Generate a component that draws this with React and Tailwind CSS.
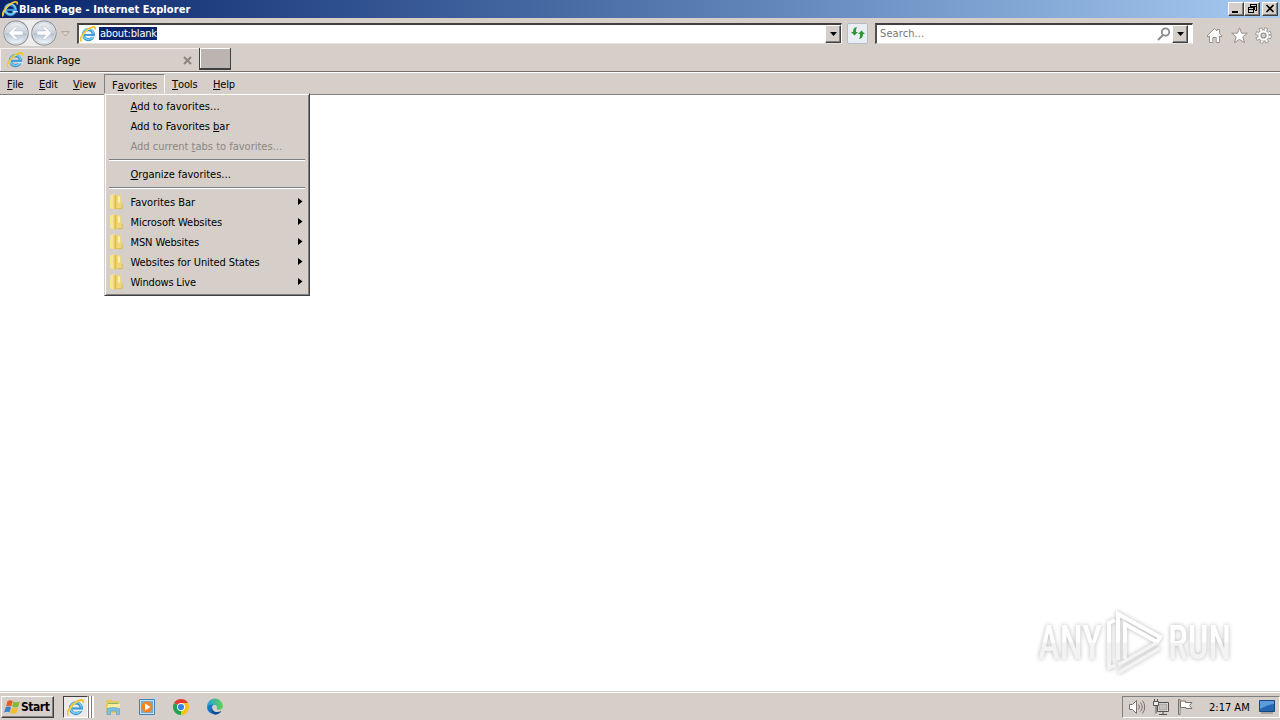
import React from "react";

const raised =
  "border border-t-white border-l-white border-r-[#404040] border-b-[#404040] shadow-[inset_-1px_-1px_0_#808080]";

function IELogo({ className }) {
  return (
    <svg viewBox="0 0 16 16" className={className}>
      <circle cx="8.400" cy="8.600" r="5" fill="none" stroke="#2e8fd0" strokeWidth="3.200" />
      <circle cx="8.400" cy="8.200" r="5.200" fill="none" stroke="#7acbf2" strokeWidth="1.500" />
      <path d="M5 8.900h9.500" stroke="#3a9bd8" strokeWidth="2" />
      <path d="M10.500 10.100h5.500v1.200h-5.500z" fill="#e3eef2" />
      <path d="M1.200 15.300C-.8 13 3 6.500 8 3.200S16 .2 15.100 3.600" fill="none" stroke="#eec32c" strokeWidth="1.800" />
      <path d="M1.500 14.200C1.500 11 5 5.700 9.500 3" fill="none" stroke="#ffe88a" strokeWidth=".7" />
    </svg>
  );
}

function NavButton({ flip }) {
  return (
    <svg viewBox="0 0 26 26" className="size-[26px] shrink-0">
      <defs>
        <linearGradient id={flip ? "nf" : "nb"} x2="0" y2="1">
          <stop offset="0" stopColor="#eef0f3" />
          <stop offset=".48" stopColor="#cbd3dc" />
          <stop offset=".52" stopColor="#b3c0ce" />
          <stop offset="1" stopColor="#f4fafd" />
        </linearGradient>
      </defs>
      <circle cx="13" cy="13" r="12.200" fill="#f3f5f6" stroke="#8f949b" strokeWidth="1.200" />
      <circle cx="13" cy="13" r="10.700" fill={`url(#${flip ? "nf" : "nb"})`} stroke="#bcc5ce" strokeWidth=".7" />
      <path
        transform={flip ? "translate(26 0) scale(-1 1)" : undefined}
        d="M5.500 13l6.300-6.200h3.400L11.200 11h8.800v4h-8.800l4 4.200h-3.400z"
        fill="#fff"
        stroke="#a9b6c4"
        strokeWidth=".5"
      />
    </svg>
  );
}

function Drop() {
  return (
    <div className={`flex h-[18px] w-4 shrink-0 items-center justify-center bg-[#d6cfc9] ${raised}`}>
      <svg viewBox="0 0 7 4" className="h-1 w-[7px]"><path d="M0 0h7L3.500 4z" fill="#000" /></svg>
    </div>
  );
}

function WinButton({ children }) {
  return (
    <div className={`h-[14px] w-4 bg-[#d6cfc9] ${raised}`}>
      <svg viewBox="0 0 14 12" className="h-3 w-[14px]" fill="none" stroke="#000" shapeRendering="crispEdges">{children}</svg>
    </div>
  );
}

function Folder() {
  return (
    <svg viewBox="0 0 16 16" className="mr-[6px] size-4 shrink-0">
      <path d="M1 1.300L6 .3V15.200l-5-1z" fill="#f6e596" />
      <path d="M4 1h6v13.800H4z" fill="#f3d978" />
      <path d="M5.500 1.500l2-.8v14.500l-2 .3z" fill="#e0bb47" />
      <path d="M7.500 1.500H12v6.700l1.500 1V14.500h-6z" fill="#f0d67c" />
      <path d="M9 2.500h2v6H9z" fill="#fdf1b8" />
      <path d="M8 14.600h5.500M13.200 9.500v5" stroke="#d8b84f" strokeWidth=".8" />
    </svg>
  );
}

function Hot({ text, k }) {
  const i = text.indexOf(k);
  return (
    <>
      {text.slice(0, i)}
      <span className="underline decoration-1 underline-offset-[1px]">{k[0]}</span>
      {text.slice(i + 1)}
    </>
  );
}

function Action({ text, k, cls }) {
  return (
    <div className={`flex h-5 items-center pl-[25.500px] ${cls}`}>
      <span><Hot text={text} k={k} /></span>
    </div>
  );
}

function Sep() {
  return (
    <div className="flex h-2 items-center px-1">
      <div className="h-[2px] w-full border-t border-b border-t-[#808080] border-b-white" />
    </div>
  );
}

function Sub({ text, cls }) {
  return (
    <div className="flex h-5 items-center pr-[6px] pl-1">
      <Folder />
      <span className={`-ml-[0.500px] grow ${cls}`}>{text}</span>
      <svg viewBox="0 0 5 7" className="mb-px h-[7px] w-[5px]"><path d="M0 0v7l4.500-3.500z" /></svg>
    </div>
  );
}

function FavoritesMenu() {
  return (
    <div className="absolute top-[93px] left-[104px] z-10 h-[203px] w-[206px] border border-t-[#d6cfc9] border-r-[#404040] border-b-[#404040] border-l-[#d6cfc9] bg-[#d6cfc9] pt-[2px] shadow-[inset_1px_1px_0_#fff,inset_-1px_-1px_0_#808080]">
      <Action text="Add to favorites..." k="Add" cls="tracking-[0.05px]" />
      <Action text="Add to Favorites bar" k="bar" cls="tracking-[-0.03px]" />
      <Action text="Add current tabs to favorites..." k="tabs" cls="text-[#8b8783]" />
      <Sep />
      <Action text="Organize favorites..." k="Organize" cls="" />
      <Sep />
      <Sub text="Favorites Bar" cls="" />
      <Sub text="Microsoft Websites" cls="tracking-[-0.06px]" />
      <Sub text="MSN Websites" cls="tracking-[-0.12px]" />
      <Sub text="Websites for United States" cls="tracking-[-0.09px]" />
      <Sub text="Windows Live" cls="tracking-[-0.18px]" />
    </div>
  );
}

function TitleBar() {
  return (
    <header className="flex h-[18px] items-center bg-linear-to-r from-[#0a246a] to-[#a6caf0] pr-[2px] pl-0.5">
      <IELogo className="size-4" />
      <span className="ml-px grow font-bold tracking-[0.080px] whitespace-nowrap text-white">Blank Page - Internet Explorer</span>
      <WinButton><path d="M3 9h6" strokeWidth="2" /></WinButton>
      <WinButton>
        <path d="M5 1h6v2H5zM10 3h1v4h-1M5 3v1M3 4h6v2H3zM3.500 5v4.500h5V5" />
      </WinButton>
      <div className="w-[2px]" />
      <WinButton><path d="M3.500 2l7 7M10.500 2l-7 7" strokeWidth="1.600" shapeRendering="auto" /></WinButton>
    </header>
  );
}

function AddressRow() {
  return (
    <div className="flex h-[30px] items-center pt-px pr-[7px] pl-[3px]">
      <div className="-mt-px flex gap-[2px] rounded-full bg-[#efedeb]">
        <NavButton />
        <NavButton flip />
      </div>
      <svg viewBox="0 0 9 6" className="mr-[7px] ml-[4px] h-1.5 w-[9px]"><path d="M.7.700h7.600L4.500 5z" fill="#dfdad5" stroke="#a9a29b" /></svg>
      <div className="flex h-[21px] w-[765px] items-center border-t-2 border-r border-b border-l-2 border-t-[#404040] border-r-white border-b-[#e5e1dc] border-l-[#505050] bg-white pl-px">
        <IELogo className="size-4" />
        <span className="mb-px ml-[3px] flex h-[13px] items-center bg-[#0a246a] pl-px tracking-[-0.19px] whitespace-nowrap text-white">about:blank</span>
        <span className="grow" />
        <Drop />
      </div>
      <div className="ml-[5px] flex size-[21px] items-center justify-center rounded-[2px] border border-[#b5bcc3] bg-[#e9eef4]">
        <svg viewBox="0 0 16 14" className="-mt-0.5 h-3.5 w-4" fill="#2f9a35">
          <path d="M1 6h2c0-3 1-4.500 4-5-1 1.500-1 3-1 5h2L4.500 9.500z" />
          <path d="M15 8h-2c0 3-1 4.500-4 5 1-1.500 1-3 1-5H8l3.500-3.500z" />
        </svg>
      </div>
      <div className="ml-[7px] flex h-[21px] w-[318px] items-center border-t-2 border-r border-b border-l-2 border-t-[#404040] border-r-white border-b-[#e5e1dc] border-l-[#505050] bg-white pr-[4px] pl-[3px]">
        <span className="mb-px grow tracking-[0.1px] text-[#777]">Search...</span>
        <svg viewBox="0 0 14 14" className="mr-px size-3.5" fill="none" stroke="#8b8b91">
          <circle cx="8.500" cy="5" r="3.700" strokeWidth="1.800" />
          <path d="M6 8l-5 5" strokeWidth="2" />
        </svg>
        <Drop />
      </div>
      <div className="mt-[3px] ml-[13px] flex gap-2">
        <svg viewBox="0 0 17 17" className="size-[17px]" fill="#fff" stroke="#96918c">
          <path d="M1 9l7.500-7.500L11 4V2.500h2.500v4L16 9l-1 1-1.500-1v6.500h-3.300v-5H6.800v5H3.500V9L2 10z" />
        </svg>
        <svg viewBox="0 0 17 17" className="size-[17px]" fill="#fff" stroke="#96918c">
          <path d="M8.500.8l2.100 5.400h5.700l-4.500 3.600 1.700 5.900-5-3.400-5 3.400 1.700-5.900L.7 6.200h5.700z" />
        </svg>
        <svg viewBox="0 0 17 17" className="-ml-px size-[17px]">
          <circle cx="8.500" cy="8.500" r="6.500" fill="none" stroke="#8f8a85" strokeWidth="3.400" strokeDasharray="3.200 1.905" />
          <circle cx="8.500" cy="8.500" r="5.700" fill="#fff" stroke="#8f8a85" />
          <circle cx="8.500" cy="8.500" r="6.300" fill="none" stroke="#fff" strokeWidth="2.200" strokeDasharray="2 2.948" strokeDashoffset="-.5" />
          <circle cx="8.500" cy="8.500" r="2.500" fill="#d6cfc9" stroke="#8f8a85" strokeWidth="1.200" />
        </svg>
      </div>
    </div>
  );
}

function TabRow() {
  return (
    <div className="flex h-6 border-b border-[#77716c]">
      <div className="flex w-[199px] items-center border-t border-l border-[#f3f0ee] pr-[7px] pl-1.5">
        <IELogo className="size-4" />
        <span className="ml-[4px] grow tracking-[-0.16px]">Blank Page</span>
        <svg viewBox="0 0 9 9" className="size-[9px]" stroke="#8b857f" strokeWidth="2"><path d="M1 1l7 7M8 1L1 8" /></svg>
      </div>
      <div className="h-[22px] w-8 border-r-[1.500px] border-b-2 border-l border-r-[#404040] border-b-[#404040] border-l-[#404040] bg-[#bcb4b1] shadow-[inset_1px_1px_0_#fff]" />
    </div>
  );
}

function MenuBar() {
  const item = "flex h-[21px] items-center pt-px";
  return (
    <nav className="flex h-[23px] border-t border-b border-t-white border-b-[#85807b] pl-[7px]">
      <span className={`${item} w-8 tracking-[-0.2px]`}><Hot text="File" k="F" /></span>
      <span className={`${item} w-[34px] tracking-[-0.1px]`}><Hot text="Edit" k="E" /></span>
      <span className={`${item} w-[31px] tracking-[-0.2px]`}><Hot text="View" k="V" /></span>
      <span className="mt-px flex h-[20px] w-[61px] items-center border border-t-[#808080] border-r-white border-b-[#d6cfc9] border-l-[#808080] pt-[2px] pl-[7px] tracking-[-0.05px]"><Hot text="Favorites" k="avor" /></span>
      <span className={`${item} w-[41px] pl-[7px] tracking-[-0.1px]`}><Hot text="Tools" k="T" /></span>
      <span className={`${item} pl-[7px] tracking-[-0.2px]`}><Hot text="Help" k="H" /></span>
    </nav>
  );
}

function Watermark() {
  return (
    <div className="absolute top-[606px] left-[1030px] flex text-white drop-shadow-[0_0_2px_#b8b8b8]">
      <svg viewBox="-6 -2 216 72" className="h-[72px] w-[216px]">
        <defs>
          <linearGradient id="wm" gradientUnits="userSpaceOnUse" x1="0" y1="34" x2="0" y2="35">
            <stop stopColor="#fff" />
            <stop offset="1" stopColor="#f3f3f3" />
          </linearGradient>
        </defs>
        <g fill="url(#wm)" fontFamily="Roboto, sans-serif" fontWeight="500" fontSize="48">
          <text x="2" y="51" textLength="64" lengthAdjust="spacingAndGlyphs">ANY</text>
          <text x="132" y="51" textLength="63" lengthAdjust="spacingAndGlyphs">RUN</text>
        </g>
        <g fill="none" stroke="url(#wm)" strokeWidth="4">
          <path d="M82 52V6l42 23-3 5-32-18v35" />
          <path d="M79 12l-6 3v45l7-3" />
          <path d="M82 65l42-25M82 57l40-23" strokeWidth="3.500" />
        </g>
      </svg>
    </div>
  );
}

function Taskbar() {
  return (
    <footer className="mt-px flex h-[28px] items-center border-t border-white pb-[2px] pl-px">
      <div className={`mt-[3px] flex h-[22px] w-[53px] items-center pl-[2px] text-[12px] font-bold ${raised}`}>
        <svg viewBox="0 0 16 16" className="mr-px size-4 shrink-0">
          <path d="M3.500 2c2-1 4-.8 5.300 0L7.300 7.300c-1.800-.8-3.500-.7-5.300.1z" fill="#e85b22" />
          <path d="M9.500 2.500c2 1 4 .9 6.300-.2l-1.500 5.400c-2 1-4.200 1-6.200.1z" fill="#83b936" />
          <path d="M1.700 8.200c2-.9 3.700-.8 5.300 0L5.500 13.500c-1.600-.9-3.400-.9-5.400.1z" fill="#3e83c7" />
          <path d="M7.800 8.700c1.900 1 4.200 1 6.200 0l-1.500 5.300c-2 1.100-4.200 1-6.200 0z" fill="#f5bd27" />
        </svg>
        <span className="tracking-[-0.45px]">Start</span>
      </div>
      <div className="mt-[3px] ml-[9px] flex h-[22px] w-[25px] items-center justify-center border border-t-[#404040] border-r-white border-b-white border-l-[#404040] bg-[#ece9e6]">
        <IELogo className="size-[17px]" />
      </div>
      <div className="mt-[3px] h-[22px] w-[3px] border-r-2 border-r-white bg-[#807b76]" />
      <div className="mt-[3px] h-[22px] w-[3px] border-r-2 border-r-white bg-[#807b76]" />
      <div className="mt-[3px] ml-[10px] flex items-center gap-[16px]">
        <svg viewBox="0 0 18 18" className="size-[18px]">
          <path d="M2 2.500l5-1 1.500 1.500H15v12H2z" fill="#e9c75d" />
          <path d="M4 5h10v5H4z" fill="#78b976" />
          <path d="M4 6h12v7H2.500z" fill="#faeba0" />
          <path d="M3 10.500q6-2 12.500 0v6h-3v-3.500h-6v3.500H3z" fill="#7fc0e2" stroke="#4d9bc8" strokeWidth=".6" />
        </svg>
        <svg viewBox="0 0 18 18" className="size-[18px]">
          <path d="M1.500 1.500h15v15h-15z" fill="#c3dff2" stroke="#4482b7" />
          <path d="M3 3h12v12H3z" fill="#76acd5" />
          <circle cx="9" cy="9" r="5.600" fill="#f5841f" />
          <path d="M7 5.500l5.500 3.500L7 12.500z" fill="#fff" />
        </svg>
        <svg viewBox="0 0 18 18" className="size-[18px]">
          <path d="M9 9L2.070 5a8 8 0 0 1 13.860 0z" fill="#e33b2e" />
          <path d="M9 9L2.070 5A8 8 0 0 0 9 17z" fill="#29a04b" />
          <path d="M9 9h0l0 8a8 8 0 0 0 6.930-12H9z" fill="#fbc116" />
          <circle cx="9" cy="9" r="4" fill="#fff" />
          <circle cx="9" cy="9" r="3.100" fill="#3d7fe8" />
        </svg>
        <svg viewBox="0 0 18 18" className="size-[18px]">
          <defs>
            <linearGradient id="eg"><stop stopColor="#259fde" /><stop offset="1" stopColor="#61d34e" /></linearGradient>
          </defs>
          <path d="M1 9a8 8 0 0 1 16-.8c0 3-4 4.300-6.500 2.800 1.500-2 0-4-2.500-4S2 8 1 9z" fill="url(#eg)" />
          <path d="M1 9c1-2 4-3 6.500-2C5 8 5 13 8.500 14.500c2.500 1 5 .5 7-1.500A8 8 0 0 1 1 9z" fill="#1477c4" />
          <path d="M6.200 9c-.6 4 3.800 6.500 9.300 4C13 16.500 9 17.200 7 15.500S4.500 11 6.200 9z" fill="#124b91" />
        </svg>
      </div>
      <div className="grow" />
      <div className="mt-[3px] flex h-[22px] w-[158px] items-center border border-t-[#808080] border-r-white border-b-white border-l-[#808080] pl-[5px]">
        <svg viewBox="0 0 18 18" className="size-[18px]" fill="none" stroke="#77726e">
          <path d="M1.500 6.500h3l4-4v13l-4-4h-3z" fill="#fff" />
          <path d="M10.500 6.500q2 2.500 0 5M12.500 4.500q3.500 4.500 0 9M14.500 2.500q4.500 6.500 0 13" />
        </svg>
        <svg viewBox="0 0 18 18" className="ml-[6px] size-[18px]" fill="none" stroke="#55514e">
          <path d="M5.500 4.500h11v9h-11z" fill="#efedeb" />
          <path d="M7 6h8v6H7z" fill="#c4c0bc" stroke="#8b8783" strokeWidth=".6" />
          <path d="M7 16.500h8M11 14v2M2.500 1v3M5.500 1v3M4 7.500v8" />
          <path d="M1.500 3.500h5v4h-5z" fill="#efedeb" />
        </svg>
        <svg viewBox="0 0 18 18" className="ml-[6px] size-[18px]" fill="#fff" stroke="#77726e">
          <path d="M2.500 1.500h1.500v15H2.500zM4.500 3h5v1.500h6.500l-2.500 3 2.500 3h-6V9.500h-5.500z" />
        </svg>
        <span className="ml-[15px] whitespace-nowrap">2:17 AM</span>
        <svg viewBox="0 0 16 14" className="ml-[9px] h-3.5 w-4 shrink-0">
          <path d="M.5.500h15v11H.5z" fill="#2467b4" stroke="#164580" />
          <path d="M1 1h14v3q-7 1-14 5z" fill="#5c9bdc" />
          <path d="M2 13h12" stroke="#777" />
        </svg>
      </div>
    </footer>
  );
}

export default function App() {
  return (
    <div className="relative flex h-[720px] w-[1280px] flex-col overflow-hidden bg-[#d6cfc9] font-['DejaVu_Sans_Condensed','DejaVu_Sans',sans-serif] text-[11px] leading-[13px] text-black [font-stretch:condensed]">
      <TitleBar />
      <AddressRow />
      <TabRow />
      <MenuBar />
      <main className="grow bg-white" />
      <Taskbar />
      <FavoritesMenu />
      <Watermark />
    </div>
  );
}
